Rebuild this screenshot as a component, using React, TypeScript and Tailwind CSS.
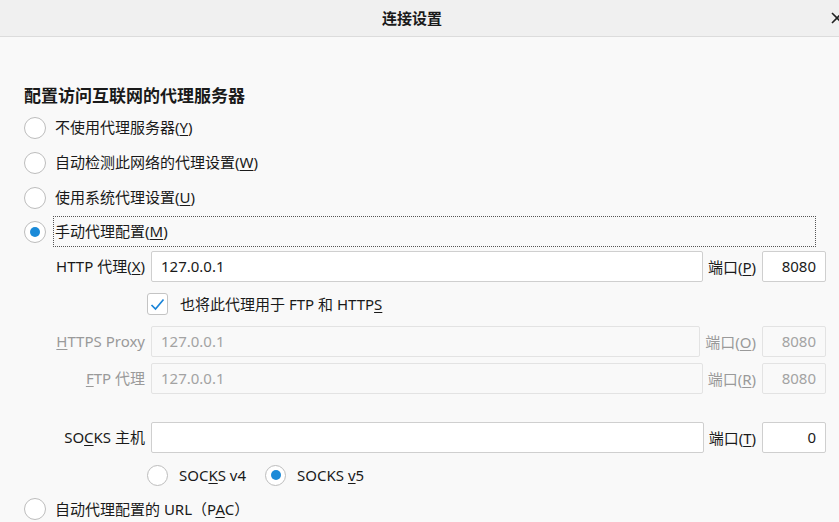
import type { ReactNode } from "react";

const FONT = { fontFamily: '"Noto Sans", "Noto Sans CJK SC", sans-serif' };

function Radio({ checked = false, size = 22 }: { checked?: boolean; size?: number }) {
  return (
    <span
      className="flex shrink-0 items-center justify-center rounded-full border border-[#bdbdbd] bg-white"
      style={{ width: size, height: size }}
    >
      {checked && <span className="h-[10px] w-[10px] rounded-full bg-[#1a8ad8]" />}
    </span>
  );
}

function Field({
  value,
  disabled = false,
  right = false,
  className = "",
}: {
  value: string;
  disabled?: boolean;
  right?: boolean;
  className?: string;
}) {
  return (
    <div
      className={`flex h-[31px] items-center rounded-[2px] border px-[9px] text-[15px] ${
        disabled
          ? "border-[#e3e3e3] bg-[#f9f9f9] text-[#a3a3a3]"
          : "border-[#cfcfcf] bg-white text-[#1a1a1a]"
      } ${right ? "justify-end" : ""} ${className}`}
    >
      {value}
    </div>
  );
}

function PortLabel({ k, disabled = false }: { k: string; disabled?: boolean }) {
  return (
    <span className={`shrink-0 text-[15px] ${disabled ? "text-[#9a9a9a]" : "text-[#1a1a1a]"}`}>
      端口(<u className="underline-offset-2">{k}</u>)
    </span>
  );
}

function ProxyRow({
  label,
  value,
  port,
  k,
  disabled = false,
  className = "",
}: {
  label: ReactNode;
  value: string;
  port: string;
  k: string;
  disabled?: boolean;
  className?: string;
}) {
  return (
    <div className={`flex h-[31px] items-center ${className}`}>
      <span
        className={`w-[90px] shrink-0 text-right text-[15px] whitespace-nowrap ${
          disabled ? "text-[#9a9a9a]" : "text-[#1a1a1a]"
        }`}
      >
        {label}
      </span>
      <Field value={value} disabled={disabled} className="ml-[6px] flex-1" />
      <span className="ml-[5px]">
        <PortLabel k={k} disabled={disabled} />
      </span>
      <Field value={port} disabled={disabled} right className="ml-[6px] w-[64px] shrink-0" />
    </div>
  );
}

function RadioRow({ children }: { children: ReactNode }) {
  return (
    <div className="flex h-[35px] items-center">
      <Radio />
      <span className="ml-[9px] text-[15px] text-[#1a1a1a]">{children}</span>
    </div>
  );
}

export default function App() {
  return (
    <div className="h-[522px] w-[839px] overflow-hidden bg-[#f9f9f9]" style={FONT}>
      {/* 标题栏 */}
      <div className="relative flex h-[37px] items-center justify-center border-b border-[#dcdcdc] bg-[#f0f0f0] pr-[15px]">
        <span className="text-[15px] font-bold text-[#1a1a1a]">连接设置</span>
        <svg className="absolute top-[12px] left-[831px]" width="12" height="12" viewBox="0 0 12 12">
          <path d="M1 1 L11 11 M11 1 L1 11" stroke="#222" strokeWidth="1.6" />
        </svg>
      </div>

      <div className="pl-[24px]">
        <h2 className="mt-[47px] mb-[2px] h-[24px] text-[17px] leading-[24px] font-bold text-[#1a1a1a]">
          配置访问互联网的代理服务器
        </h2>

        <RadioRow>
          不使用代理服务器(<u className="underline-offset-2">Y</u>)
        </RadioRow>
        <RadioRow>
          自动检测此网络的代理设置(<u className="underline-offset-2">W</u>)
        </RadioRow>
        <RadioRow>
          使用系统代理设置(<u className="underline-offset-2">U</u>)
        </RadioRow>

        <div className="mt-px flex h-[31px] items-center pr-[23px]">
          <Radio checked />
          <span className="ml-[7px] flex h-full flex-1 items-center border border-dotted border-[#555] pl-px text-[15px] text-[#1a1a1a]">
            手动代理配置(<u className="underline-offset-2">M</u>)
          </span>
        </div>

        {/* 手动代理 */}
        <div className="pl-[31px] pr-[13px]">
          <ProxyRow
            className="mt-[4px]"
            label={
              <>
                HTTP 代理(<u className="underline-offset-2">X</u>)
              </>
            }
            value="127.0.0.1"
            port="8080"
            k="P"
          />

          <div className="mt-[11px] ml-[92px] flex h-[22px] items-center">
            <span className="flex h-[22px] w-[21px] items-center justify-center rounded-[3px] border border-[#c4c4c4] bg-white">
              <svg width="15" height="13" viewBox="0 0 15 13">
                <path d="M1.5 7 L5.5 11 L13.5 1.5" fill="none" stroke="#1a84d8" strokeWidth="1.7" />
              </svg>
            </span>
            <span className="ml-[12px] text-[15px] text-[#1a1a1a]">
              也将此代理用于 FTP 和 HTTP<u className="underline-offset-2">S</u>
            </span>
          </div>

          <ProxyRow
            className="mt-[11px]"
            disabled
            label={
              <>
                <u className="underline-offset-2">H</u>TTPS Proxy
              </>
            }
            value="127.0.0.1"
            port="8080"
            k="O"
          />
          <ProxyRow
            className="mt-[6px]"
            disabled
            label={
              <>
                <u className="underline-offset-2">F</u>TP 代理
              </>
            }
            value="127.0.0.1"
            port="8080"
            k="R"
          />
          <ProxyRow
            className="mt-[28px]"
            label={
              <>
                SO<u className="underline-offset-2">C</u>KS 主机
              </>
            }
            value=""
            port="0"
            k="T"
          />

          <div className="mt-[11px] ml-[92px] flex h-[22px] items-center">
            <Radio size={21} />
            <span className="ml-[11px] text-[15px] text-[#1a1a1a]">
              SOC<u className="underline-offset-2">K</u>S v4
            </span>
            <span className="ml-[19px]">
              <Radio checked size={21} />
            </span>
            <span className="ml-[11px] text-[15px] text-[#1a1a1a]">
              SOCKS <u className="underline-offset-2">v</u>5
            </span>
          </div>
        </div>

        <div className="mt-[12px] flex h-[22px] items-center">
          <Radio />
          <span className="ml-[9px] text-[15px] text-[#1a1a1a]">
            自动代理配置的 URL（P<u className="underline-offset-2">A</u>C）
          </span>
        </div>
      </div>
    </div>
  );
}
